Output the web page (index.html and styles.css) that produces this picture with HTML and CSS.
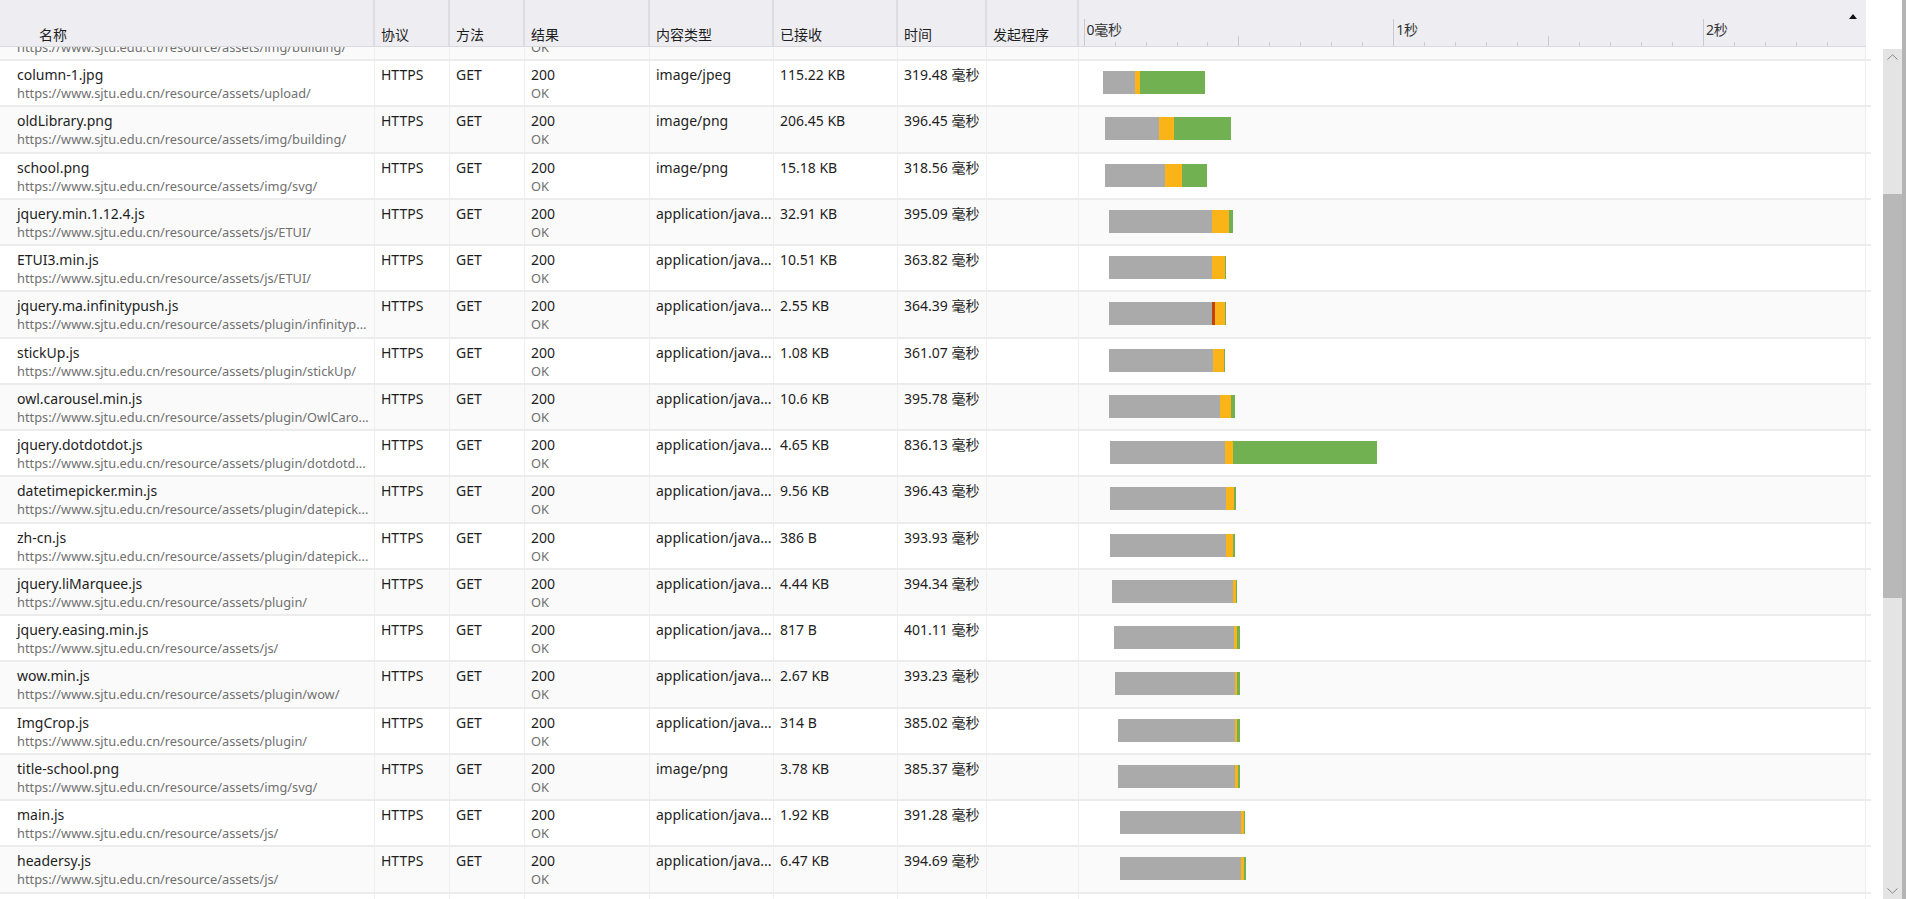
FILE: index.html
```html
<!DOCTYPE html>
<html lang="zh-CN">
<head>
<meta charset="utf-8">
<title>网络</title>
<link rel="stylesheet" href="styles.css">
</head>
<body>
<div class="app">
  <div class="grid">
    <div class="header">
      <div class="h name">名称</div>
      <div class="h proto">协议</div>
      <div class="h method">方法</div>
      <div class="h result">结果</div>
      <div class="h type">内容类型</div>
      <div class="h recv">已接收</div>
      <div class="h time">时间</div>
      <div class="h init">发起程序</div>
      <div class="h wf">
        <div class="ruler">
          <div class="tick big"><span>0毫秒</span></div>
          <div class="tick"></div><div class="tick"></div><div class="tick"></div><div class="tick"></div>
          <div class="tick mid"></div>
          <div class="tick"></div><div class="tick"></div><div class="tick"></div><div class="tick"></div>
          <div class="tick big"><span>1秒</span></div>
          <div class="tick"></div><div class="tick"></div><div class="tick"></div><div class="tick"></div>
          <div class="tick mid"></div>
          <div class="tick"></div><div class="tick"></div><div class="tick"></div><div class="tick"></div>
          <div class="tick big"><span>2秒</span></div>
          <div class="tick"></div><div class="tick"></div><div class="tick"></div><div class="tick"></div>
        </div>
        <div class="sort"></div>
      </div>
    </div>
    <div class="list">
      <div class="row alt first">
        <div class="c name"><div class="t2">https://www.sjtu.edu.cn/resource/assets/img/building/</div></div>
        <div class="c proto"></div><div class="c method"></div>
        <div class="c result"><div class="t2">OK</div></div>
        <div class="c type"></div><div class="c recv"></div><div class="c time"></div><div class="c init"></div>
        <div class="c wf"></div>
        <div class="tail"></div>
      </div>
      <div class="row">
        <div class="c name"><div class="t1">column-1.jpg</div><div class="t2">https://www.sjtu.edu.cn/resource/assets/upload/</div></div>
        <div class="c proto">HTTPS</div><div class="c method">GET</div>
        <div class="c result"><div class="t1">200</div><div class="t2">OK</div></div>
        <div class="c type">image/jpeg</div><div class="c recv">115.22 KB</div><div class="c time">319.48 毫秒</div><div class="c init"></div>
        <div class="c wf"><div class="bar" style="margin-left:24px"><i class="g" style="width:31.7px"></i><i class="o" style="width:5.3px"></i><i class="n" style="width:65px"></i></div></div>
        <div class="tail"></div>
      </div>
      <div class="row alt">
        <div class="c name"><div class="t1">oldLibrary.png</div><div class="t2">https://www.sjtu.edu.cn/resource/assets/img/building/</div></div>
        <div class="c proto">HTTPS</div><div class="c method">GET</div>
        <div class="c result"><div class="t1">200</div><div class="t2">OK</div></div>
        <div class="c type">image/png</div><div class="c recv">206.45 KB</div><div class="c time">396.45 毫秒</div><div class="c init"></div>
        <div class="c wf"><div class="bar" style="margin-left:26px"><i class="g" style="width:53.5px"></i><i class="o" style="width:15.5px"></i><i class="n" style="width:57.4px"></i></div></div>
        <div class="tail"></div>
      </div>
      <div class="row">
        <div class="c name"><div class="t1">school.png</div><div class="t2">https://www.sjtu.edu.cn/resource/assets/img/svg/</div></div>
        <div class="c proto">HTTPS</div><div class="c method">GET</div>
        <div class="c result"><div class="t1">200</div><div class="t2">OK</div></div>
        <div class="c type">image/png</div><div class="c recv">15.18 KB</div><div class="c time">318.56 毫秒</div><div class="c init"></div>
        <div class="c wf"><div class="bar" style="margin-left:26px"><i class="g" style="width:59.5px"></i><i class="o" style="width:17px"></i><i class="n" style="width:25.5px"></i></div></div>
        <div class="tail"></div>
      </div>
      <div class="row alt">
        <div class="c name"><div class="t1">jquery.min.1.12.4.js</div><div class="t2">https://www.sjtu.edu.cn/resource/assets/js/ETUI/</div></div>
        <div class="c proto">HTTPS</div><div class="c method">GET</div>
        <div class="c result"><div class="t1">200</div><div class="t2">OK</div></div>
        <div class="c type">application/java...</div><div class="c recv">32.91 KB</div><div class="c time">395.09 毫秒</div><div class="c init"></div>
        <div class="c wf"><div class="bar" style="margin-left:29.6px"><i class="g" style="width:103.4px"></i><i class="o" style="width:17px"></i><i class="n" style="width:4px"></i></div></div>
        <div class="tail"></div>
      </div>
      <div class="row">
        <div class="c name"><div class="t1">ETUI3.min.js</div><div class="t2">https://www.sjtu.edu.cn/resource/assets/js/ETUI/</div></div>
        <div class="c proto">HTTPS</div><div class="c method">GET</div>
        <div class="c result"><div class="t1">200</div><div class="t2">OK</div></div>
        <div class="c type">application/java...</div><div class="c recv">10.51 KB</div><div class="c time">363.82 毫秒</div><div class="c init"></div>
        <div class="c wf"><div class="bar" style="margin-left:29.6px"><i class="g" style="width:103.4px"></i><i class="o" style="width:13px"></i><i class="n" style="width:0.6px"></i></div></div>
        <div class="tail"></div>
      </div>
      <div class="row alt">
        <div class="c name"><div class="t1">jquery.ma.infinitypush.js</div><div class="t2">https://www.sjtu.edu.cn/resource/assets/plugin/infinityp...</div></div>
        <div class="c proto">HTTPS</div><div class="c method">GET</div>
        <div class="c result"><div class="t1">200</div><div class="t2">OK</div></div>
        <div class="c type">application/java...</div><div class="c recv">2.55 KB</div><div class="c time">364.39 毫秒</div><div class="c init"></div>
        <div class="c wf"><div class="bar" style="margin-left:30px"><i class="g" style="width:102.7px"></i><i class="r" style="width:3.3px"></i><i class="o" style="width:10px"></i><i class="n" style="width:1px"></i></div></div>
        <div class="tail"></div>
      </div>
      <div class="row">
        <div class="c name"><div class="t1">stickUp.js</div><div class="t2">https://www.sjtu.edu.cn/resource/assets/plugin/stickUp/</div></div>
        <div class="c proto">HTTPS</div><div class="c method">GET</div>
        <div class="c result"><div class="t1">200</div><div class="t2">OK</div></div>
        <div class="c type">application/java...</div><div class="c recv">1.08 KB</div><div class="c time">361.07 毫秒</div><div class="c init"></div>
        <div class="c wf"><div class="bar" style="margin-left:30px"><i class="g" style="width:103.7px"></i><i class="o" style="width:11px"></i><i class="n" style="width:1px"></i></div></div>
        <div class="tail"></div>
      </div>
      <div class="row alt">
        <div class="c name"><div class="t1">owl.carousel.min.js</div><div class="t2">https://www.sjtu.edu.cn/resource/assets/plugin/OwlCaro...</div></div>
        <div class="c proto">HTTPS</div><div class="c method">GET</div>
        <div class="c result"><div class="t1">200</div><div class="t2">OK</div></div>
        <div class="c type">application/java...</div><div class="c recv">10.6 KB</div><div class="c time">395.78 毫秒</div><div class="c init"></div>
        <div class="c wf"><div class="bar" style="margin-left:29.6px"><i class="g" style="width:111.8px"></i><i class="o" style="width:11px"></i><i class="n" style="width:3.6px"></i></div></div>
        <div class="tail"></div>
      </div>
      <div class="row">
        <div class="c name"><div class="t1">jquery.dotdotdot.js</div><div class="t2">https://www.sjtu.edu.cn/resource/assets/plugin/dotdotd...</div></div>
        <div class="c proto">HTTPS</div><div class="c method">GET</div>
        <div class="c result"><div class="t1">200</div><div class="t2">OK</div></div>
        <div class="c type">application/java...</div><div class="c recv">4.65 KB</div><div class="c time">836.13 毫秒</div><div class="c init"></div>
        <div class="c wf"><div class="bar" style="margin-left:31px"><i class="g" style="width:115px"></i><i class="o" style="width:8px"></i><i class="n" style="width:144px"></i></div></div>
        <div class="tail"></div>
      </div>
      <div class="row alt">
        <div class="c name"><div class="t1">datetimepicker.min.js</div><div class="t2">https://www.sjtu.edu.cn/resource/assets/plugin/datepick...</div></div>
        <div class="c proto">HTTPS</div><div class="c method">GET</div>
        <div class="c result"><div class="t1">200</div><div class="t2">OK</div></div>
        <div class="c type">application/java...</div><div class="c recv">9.56 KB</div><div class="c time">396.43 毫秒</div><div class="c init"></div>
        <div class="c wf"><div class="bar" style="margin-left:31px"><i class="g" style="width:115.7px"></i><i class="o" style="width:8.3px"></i><i class="n" style="width:2px"></i></div></div>
        <div class="tail"></div>
      </div>
      <div class="row">
        <div class="c name"><div class="t1">zh-cn.js</div><div class="t2">https://www.sjtu.edu.cn/resource/assets/plugin/datepick...</div></div>
        <div class="c proto">HTTPS</div><div class="c method">GET</div>
        <div class="c result"><div class="t1">200</div><div class="t2">OK</div></div>
        <div class="c type">application/java...</div><div class="c recv">386 B</div><div class="c time">393.93 毫秒</div><div class="c init"></div>
        <div class="c wf"><div class="bar" style="margin-left:31px"><i class="g" style="width:115.5px"></i><i class="o" style="width:7.5px"></i><i class="n" style="width:2px"></i></div></div>
        <div class="tail"></div>
      </div>
      <div class="row alt">
        <div class="c name"><div class="t1">jquery.liMarquee.js</div><div class="t2">https://www.sjtu.edu.cn/resource/assets/plugin/</div></div>
        <div class="c proto">HTTPS</div><div class="c method">GET</div>
        <div class="c result"><div class="t1">200</div><div class="t2">OK</div></div>
        <div class="c type">application/java...</div><div class="c recv">4.44 KB</div><div class="c time">394.34 毫秒</div><div class="c init"></div>
        <div class="c wf"><div class="bar" style="margin-left:33.3px"><i class="g" style="width:120.3px"></i><i class="o" style="width:3.7px"></i><i class="n" style="width:1.2px"></i></div></div>
        <div class="tail"></div>
      </div>
      <div class="row">
        <div class="c name"><div class="t1">jquery.easing.min.js</div><div class="t2">https://www.sjtu.edu.cn/resource/assets/js/</div></div>
        <div class="c proto">HTTPS</div><div class="c method">GET</div>
        <div class="c result"><div class="t1">200</div><div class="t2">OK</div></div>
        <div class="c type">application/java...</div><div class="c recv">817 B</div><div class="c time">401.11 毫秒</div><div class="c init"></div>
        <div class="c wf"><div class="bar" style="margin-left:34.5px"><i class="g" style="width:120.5px"></i><i class="o" style="width:3px"></i><i class="n" style="width:3px"></i></div></div>
        <div class="tail"></div>
      </div>
      <div class="row alt">
        <div class="c name"><div class="t1">wow.min.js</div><div class="t2">https://www.sjtu.edu.cn/resource/assets/plugin/wow/</div></div>
        <div class="c proto">HTTPS</div><div class="c method">GET</div>
        <div class="c result"><div class="t1">200</div><div class="t2">OK</div></div>
        <div class="c type">application/java...</div><div class="c recv">2.67 KB</div><div class="c time">393.23 毫秒</div><div class="c init"></div>
        <div class="c wf"><div class="bar" style="margin-left:35.7px"><i class="g" style="width:120.3px"></i><i class="o" style="width:2.5px"></i><i class="n" style="width:2.5px"></i></div></div>
        <div class="tail"></div>
      </div>
      <div class="row">
        <div class="c name"><div class="t1">ImgCrop.js</div><div class="t2">https://www.sjtu.edu.cn/resource/assets/plugin/</div></div>
        <div class="c proto">HTTPS</div><div class="c method">GET</div>
        <div class="c result"><div class="t1">200</div><div class="t2">OK</div></div>
        <div class="c type">application/java...</div><div class="c recv">314 B</div><div class="c time">385.02 毫秒</div><div class="c init"></div>
        <div class="c wf"><div class="bar" style="margin-left:39.4px"><i class="g" style="width:116.6px"></i><i class="o" style="width:2.4px"></i><i class="n" style="width:2.4px"></i></div></div>
        <div class="tail"></div>
      </div>
      <div class="row alt">
        <div class="c name"><div class="t1">title-school.png</div><div class="t2">https://www.sjtu.edu.cn/resource/assets/img/svg/</div></div>
        <div class="c proto">HTTPS</div><div class="c method">GET</div>
        <div class="c result"><div class="t1">200</div><div class="t2">OK</div></div>
        <div class="c type">image/png</div><div class="c recv">3.78 KB</div><div class="c time">385.37 毫秒</div><div class="c init"></div>
        <div class="c wf"><div class="bar" style="margin-left:39.4px"><i class="g" style="width:117px"></i><i class="o" style="width:2.4px"></i><i class="n" style="width:2.4px"></i></div></div>
        <div class="tail"></div>
      </div>
      <div class="row">
        <div class="c name"><div class="t1">main.js</div><div class="t2">https://www.sjtu.edu.cn/resource/assets/js/</div></div>
        <div class="c proto">HTTPS</div><div class="c method">GET</div>
        <div class="c result"><div class="t1">200</div><div class="t2">OK</div></div>
        <div class="c type">application/java...</div><div class="c recv">1.92 KB</div><div class="c time">391.28 毫秒</div><div class="c init"></div>
        <div class="c wf"><div class="bar" style="margin-left:40.6px"><i class="g" style="width:121.6px"></i><i class="o" style="width:2.4px"></i><i class="n" style="width:1.2px"></i></div></div>
        <div class="tail"></div>
      </div>
      <div class="row alt">
        <div class="c name"><div class="t1">headersy.js</div><div class="t2">https://www.sjtu.edu.cn/resource/assets/js/</div></div>
        <div class="c proto">HTTPS</div><div class="c method">GET</div>
        <div class="c result"><div class="t1">200</div><div class="t2">OK</div></div>
        <div class="c type">application/java...</div><div class="c recv">6.47 KB</div><div class="c time">394.69 毫秒</div><div class="c init"></div>
        <div class="c wf"><div class="bar" style="margin-left:40.6px"><i class="g" style="width:121.6px"></i><i class="o" style="width:2.4px"></i><i class="n" style="width:2.4px"></i></div></div>
        <div class="tail"></div>
      </div>
      <div class="row last">
        <div class="c name"></div>
        <div class="c proto"></div><div class="c method"></div>
        <div class="c result"></div>
        <div class="c type"></div><div class="c recv"></div><div class="c time"></div><div class="c init"></div>
        <div class="c wf"></div>
        <div class="tail"></div>
      </div>
    </div>
  </div>
  <div class="gap"></div>
  <div class="scroll">
    <div class="scroll-top"></div>
    <div class="track">
      <div class="arrow">
        <svg width="11" height="6" viewBox="0 0 11 6"><path d="M0.5 5.5 L5.5 0.8 L10.5 5.5" fill="none" stroke="#8a8a8a" stroke-width="1"/></svg>
      </div>
      <div class="pre"></div>
      <div class="thumb"></div>
      <div class="post"></div>
      <div class="arrow">
        <svg width="11" height="6" viewBox="0 0 11 6"><path d="M0.5 0.5 L5.5 5.2 L10.5 0.5" fill="none" stroke="#8a8a8a" stroke-width="1"/></svg>
      </div>
    </div>
  </div>
  <div class="edge"></div>
</div>
</body>
</html>
```

FILE: styles.css
```css
html, body {
  margin: 0;
  padding: 0;
  background: #ffffff;
}

body {
  font-family: "Noto Sans", "Noto Sans CJK SC", sans-serif;
  font-size: 14px;
  color: #1e1e1e;
  overflow: hidden;
}

.app {
  display: flex;
  width: 1906px;
  height: 899px;
  overflow: hidden;
}

.grid {
  width: 1871px;
  flex: none;
  display: flex;
  flex-direction: column;
  overflow: hidden;
}

/* ---------- header ---------- */
.header {
  display: flex;
  width: 1866px;
  height: 47px;
  box-sizing: border-box;
  background: #eeeef2;
  border-bottom: 1px solid #d9d9de;
  flex: none;
  position: relative;
  z-index: 2;
}

.h {
  box-sizing: border-box;
  height: 46px;
  border-right: 2px solid #dcdce1;
  padding: 25px 0 0 6px;
  line-height: 18px;
  white-space: nowrap;
  color: #1e1e1e;
  font-family: "Noto Sans CJK SC", "Noto Sans", sans-serif;
  font-size: 14px;
}

.h.name { padding-left: 39px; }
.h.wf {
  padding: 0 0 0 4.6px;
  border-right: none;
  position: relative;
  flex: 1;
}

.name { width: 375px; }
.proto { width: 75px; }
.method { width: 75px; }
.result { width: 125px; }
.type { width: 124px; }
.recv { width: 124px; }
.time { width: 89px; }
.init { width: 92px; }
.wf { width: 787px; }

.ruler {
  display: flex;
  align-items: flex-end;
  height: 46px;
}

.tick {
  flex: none;
  width: 30.98px;
  box-sizing: border-box;
  height: 4px;
  border-left: 1px solid #c9c9d1;
}

.tick.mid { height: 10px; }
.tick.big { height: 27px; }

.tick span {
  display: block;
  padding-left: 2px;
  margin-top: 2px;
  line-height: 18px;
  white-space: nowrap;
  color: #333333;
  font-size: 14px;
  font-family: "Noto Sans", "Noto Sans CJK SC", sans-serif;
  letter-spacing: -0.3px;
}

.sort {
  position: absolute;
  right: 9px;
  top: 14px;
  width: 0;
  height: 0;
  border-left: 4.5px solid transparent;
  border-right: 4.5px solid transparent;
  border-bottom: 5px solid #111111;
}

/* ---------- rows ---------- */
.list {
  flex: 1;
  overflow: hidden;
}

.row {
  display: flex;
  width: 1871px;
  height: 44.25px;
  border-bottom: 2px solid #ececec;
  flex: none;
}

.row.first {
  height: 12px;
  border-bottom-width: 2px;
}

.row.first .c {
  padding-top: 0;
}

.row.first .t2 {
  margin-top: -9px;
}

.c {
  box-sizing: border-box;
  height: 100%;
  border-right: 1px solid #efefef;
  padding: 5px 0 0 6px;
  line-height: 18px;
  white-space: nowrap;
  overflow: hidden;
  background: #ffffff;
}

.row.alt .c { background: #fafafa; }

.c.name { padding-left: 17px; }
.c.time { font-family: "Noto Sans", "Noto Sans CJK SC", sans-serif; }
.c.wf { padding: 10px 0 0 0; }

.tail {
  width: 5px;
  flex: none;
  background: #ffffff;
}

.t1 {
  font-size: 14px;
  line-height: 18px;
  color: #1e1e1e;
}

.t2 {
  font-size: 12.8px;
  line-height: 18px;
  color: #707070;
}

.bar {
  display: flex;
  height: 23px;
}

.bar i {
  display: block;
  height: 23px;
  flex: none;
}

.bar .g { background: #aaaaaa; }
.bar .o { background: #fbb417; }
.bar .n { background: #72b152; }
.bar .r { background: #c4420c; }

/* ---------- scrollbar ---------- */
.gap {
  width: 12px;
  flex: none;
}

.scroll {
  width: 19px;
  flex: none;
  display: flex;
  flex-direction: column;
}

.scroll-top {
  height: 49px;
  flex: none;
  background: #ffffff;
}

.track {
  flex: 1;
  background: #e4e4e4;
  display: flex;
  flex-direction: column;
}

.arrow {
  height: 16px;
  flex: none;
  display: flex;
  align-items: center;
  justify-content: center;
}

.pre { height: 129px; flex: none; }
.thumb { height: 404px; flex: none; background: #b8b8b8; }
.post { flex: 1; }

.edge {
  width: 4px;
  flex: none;
  background: #b4b4b4;
}
```
